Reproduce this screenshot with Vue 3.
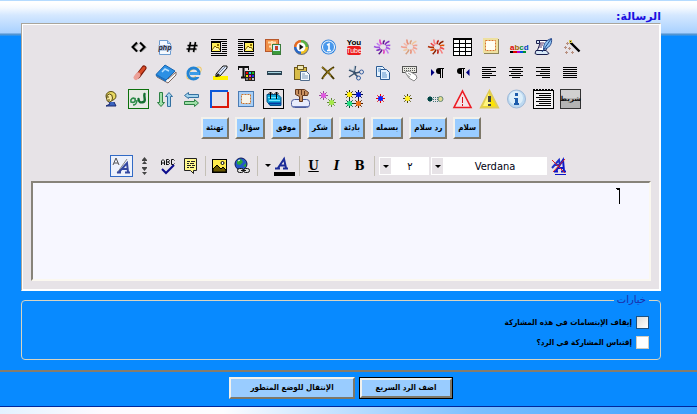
<script setup>
import { ref } from 'vue'

const message = ref('')
const font = ref('Verdana')
const size = ref('٢')
const noSmilies = ref(false)
const quote = ref(false)

// every icon is drawn on a 27x26 cell
const rect = (x, y, w, h, fill, extra = '') => `<rect x="${x}" y="${y}" width="${w}" height="${h}" fill="${fill}" ${extra}/>`
const path = (d, stroke, width = 1, fill = 'none', extra = '') => `<path d="${d}" stroke="${stroke}" stroke-width="${width}" fill="${fill}" ${extra}/>`
const line = (x, y, w) => rect(x, y, w, 1, '#000')
const round = 'stroke-linecap="round"'
const dots = 'stroke-dasharray="1 1"'
const dashes = 'stroke-dasharray="2 1"'

const burst = (colors) => {
    let out = ''
    for (let i = 0; i < 11; i++) {
        const a = (i * 32.7 + 12) * Math.PI / 180
        const end = i % 2 ? 9 : 7.5
        const p = (r, t) => `${(15 + Math.cos(t) * r).toFixed(1)} ${(13 + Math.sin(t) * r * 0.9).toFixed(1)}`
        out += path(`M${p(3, a)}Q${p(6, a - 0.05)} ${p(end, a + 0.15)}`, colors[i % colors.length], 1.6)
    }
    return out
}

const spark = (x, y, fill, ray, r = 2.5) => {
    const l = r + 2
    const d = r + 0.7
    return path(`M${x - l} ${y}h${2 * l}M${x} ${y - l}v${2 * l}M${x - d} ${y - d}l${2 * d} ${2 * d}M${x + d} ${y - d}l${-2 * d} ${2 * d}`, ray)
        + `<circle cx="${x}" cy="${y}" r="${r}" fill="${fill}"/>`
}

const thumb = (x) => rect(x, 8, 10, 10, '#000') + rect(x + 1, 9, 8, 8, '#ffef5a')
    + rect(x + 6, 10, 2, 2, '#8a6a00') + path(`M${x + 1} 16l3-4 2 2 1-1 2 3`, '#806000', 1, '#fff8b0')

const wrap = (x, lx) => line(5, 5, 16) + line(5, 7, 16) + thumb(x)
    + [9, 11, 13, 15, 17].map((y) => line(lx, y, 5)).join('') + line(5, 19, 16) + line(5, 21, 16)

const align = (offset) => [14, 9, 14, 10, 14, 8].map((w, i) => line(6 + Math.round((14 - w) * offset), 7 + i * 2, w)).join('')

const rows = [
    [
        { name: 'عصا', svg: path('M13.500 8.500l9 9', '#000', 2.4) + rect(12, 6, 3, 3, '#d8c850') + rect(13, 7, 1, 1, '#222') + path('M10.500 8v3M9 9.500h3M8.500 12v3M7 13.500h3M12.500 13v3M11 14.500h3M9.500 17v3M8 18.500h3M15.500 17v3M14 18.500h3', '#b89080') },
        { name: 'قصيدة', svg: path('M8.500 6.500h9l1 2-3 9H7l3-8z', '#171b4c', 1, '#fff') + path('M6 16.500h10l3 3-2 1H7l-2-1z', '#171b4c', 1, '#d7e8f7') + path('M6.500 6.500h3v3h-3z', '#171b4c', 1, '#d7e8f7') + path('M10 9h4M10 11h3M9 13h3', '#536') + path('M21.500 4.500c-6 2-8 5-8 11 5-1 9-5 8-11z', '#27498c', 1, '#8fc4f2') + path('M21 5L12 18', '#27498c') },
        { name: 'ألوان', svg: '<text x="7" y="16" font-family="Liberation Sans" font-weight="bold" font-size="8" fill="#e00000">a<tspan fill="#a06000">b</tspan><tspan fill="#00902c">c</tspan><tspan fill="#0040c0">d</tspan></text>' + rect(7, 17, 3, 2, '#000') + rect(10, 17, 4, 2, '#e00000') + rect(14, 17, 3, 2, '#b000d0') + rect(17, 17, 3, 2, '#0050e0') + rect(20, 17, 3, 2, '#009030') },
        { name: 'إطار', svg: rect(8, 5, 15, 15, '#8d8458') + rect(7, 4, 15, 15, '#eee0a0') + rect(9.5, 6.5, 10, 10, '#fffef4', 'stroke="#d8742e" ' + dashes) },
        { name: 'جدول', svg: rect(4, 4, 19, 18, '#000') + [6, 10, 14, 18].map((y) => [5, 11, 17].map((x) => rect(x, y, 5, 3, '#fff')).join('')).join('') },
        { name: 'نجوم حمراء', svg: burst(['#f04848', '#f88080', '#c02010', '#8c2000', '#e05000', '#b03008']) },
        { name: 'نجوم فاتحة', svg: burst(['#f0a090', '#f4b8a8', '#e89078', '#d8a080', '#f0c8a0']) },
        { name: 'نجوم بنفسجية', svg: burst(['#a050e0', '#c080f0', '#e040c0', '#601890', '#8030c0']) },
        { name: 'يوتيوب', svg: '<text x="13" y="11" text-anchor="middle" font-family="Liberation Sans" font-size="8" font-weight="bold">You</text>' + rect(6, 12, 14, 9, '#ec1c1c', 'rx="2"') + '<text x="13" y="19" text-anchor="middle" font-family="Liberation Sans" font-size="7" fill="#fff">Tube</text>' },
        { name: 'واحد', svg: '<circle cx="14.500" cy="13" r="7.500" fill="#3486df"/><circle cx="14.500" cy="13" r="6" fill="#4898ec" stroke="#fff"/>' + path('M13 11l2-1v6M13 16.500h4', '#fff', 1.6) },
        { name: 'وسائط', svg: '<circle cx="14.500" cy="13.500" r="7.500" fill="#777"/>' + path('M14 13V6a7 7 0 0 0-7 7z', 'none', 0, '#e86a20') + path('M14 13h7a7 7 0 0 0-7-7z', 'none', 0, '#58b040') + path('M14 13H7a7 7 0 0 0 7 7z', 'none', 0, '#2868c8') + path('M14 13v7a7 7 0 0 0 7-7z', 'none', 0, '#f0c020') + '<circle cx="14" cy="13" r="4.500" fill="#fff"/>' + path('M12.500 10v6l4-3z', 'none', 0, '#111') },
        { name: 'ألبوم', svg: rect(5.5, 5.5, 13, 12, '#f09048', 'stroke="#b8582c"') + path('M8 8.500h8M12 7v8M9 12.500h3', '#ffe0b0', 2) + rect(12.5, 10.5, 8, 10, '#d8f0ff', 'stroke="#3c7c3c"') + rect(13, 17, 7, 3, '#3c9c3c') + rect(15, 12, 3, 4, '#c8402c') },
        { name: 'صورة يمين', svg: wrap(11, 5) },
        { name: 'صورة يسار', svg: wrap(5, 16) },
        { name: 'كود', svg: path('M12 9l-2 10M17 9l-2 10M9 12.500h10M8 16h10', '#bbb', 1) + path('M11.500 8l-2 10M16.500 8l-2 10M8.500 11.500h10M7.500 15h10', '#000', 1.6) },
        { name: 'PHP', svg: path('M7.500 6.500h8l3 3v11h-11z', '#6c9cd0', 1, '#f4f9ff') + path('M15.500 6.500v3h3', '#6c9cd0', 1, '#bcd8f4') + rect(6, 11, 14, 6, '#b9cbe4') + '<text x="13" y="16" text-anchor="middle" font-family="Liberation Sans" font-size="7" font-weight="bold" font-style="italic" fill="#223">php</text>' },
        { name: 'HTML', svg: path('M13 9.500L8.500 13.500 13 17.500M16 9.500l4.500 4-4.500 4', '#aaa', 2) + path('M12 8.500L7.500 13l4.500 4.500M15 8.500l4.500 4.500-4.500 4.500', '#000', 2) }
    ],
    [
        { name: 'ضبط', svg: [7, 9, 11, 13, 15, 17].map((y) => line(6, y, 14)).join('') },
        { name: 'يمين', svg: align(1) },
        { name: 'توسيط', svg: align(0.5) },
        { name: 'يسار', svg: align(0) },
        { name: 'من اليمين', svg: path('M12.500 8v10M14.500 8v10M11 8.500h5', '#000') + path('M12 8h-1a3 3 0 0 0 0 6h1z', 'none', 0, '#000') + path('M20.500 9v7L17 12.500z', 'none', 0, '#000080') },
        { name: 'من اليسار', svg: path('M18.500 8v10M20.500 8v10M17 8.500h5', '#000') + path('M18 8h-1a3 3 0 0 0 0 6h1z', 'none', 0, '#000') + path('M9 9v7l3.500-3.500z', 'none', 0, '#000080') },
        { name: 'لوحة المفاتيح', svg: rect(7.5, 6.5, 14, 6, '#e8e8e0', 'stroke="#555"') + path('M9 8.500h12M9 10.500h12', '#555', 1, 'none', dots) + path('M10 12l4-1 7 4 1 3-3 3-5-3z', '#888', 1, '#fff') + path('M13 13l3 2M12 15l3 2', '#999') },
        { name: 'نسخ', svg: path('M8.500 6.500h6l2 2v8h-8z', '#2c5c94', 1, '#e4f2ff') + path('M12.500 9.500h6l3 3v7h-9z', '#2c5c94', 1, '#e4f2ff') + path('M10 9h3M10 11h2M14 13h4M14 15h5M14 17h5', '#5c94cc') },
        { name: 'قص', svg: path('M14.500 6l-1.500 7 4 4M8 10l7 3 4-1', '#38506c', 1.6) + path('M13.500 6l-.5 5M8 9l5 2', '#a8bccc') + '<circle cx="20.500" cy="12" r="2" fill="none" stroke="#3860a0"/><circle cx="17.500" cy="18" r="2" fill="none" stroke="#3860a0"/>' + path('M14 13l-6 4', '#38506c', 1.4) },
        { name: 'حذف', svg: path('M8 7c4 3 8 7 12 12M20 7c-5 3-9 7-12 12', '#463800', 2) + path('M8 7c4 3 7 6 9 9M19 8c-4 3-7 6-10 10', '#a88820') },
        { name: 'لصق', svg: rect(7.5, 7.5, 12, 12, '#d8bc48', 'stroke="#6c5820"') + rect(10.5, 5.5, 6, 4, '#f0e8b0', 'stroke="#6c5820"') + path('M13.500 11.500h6l3 3v6h-9z', '#506c8c', 1, '#f4faff') + path('M15 14h3M15 16h6M15 18h6', '#7898b8') },
        { name: 'خط', svg: rect(7, 11, 15, 4, '#2c4454') + rect(8, 12, 13, 1, '#a8d4e0') },
        { name: 'لون النص', svg: path('M5 7h11M10.500 7v10M8 17.500h4', '#111', 2) + path('M5.500 6v4M15.500 6v4', '#111') + rect(12, 11, 10, 10, '#222') + rect(13, 12, 2, 2, '#f00') + rect(16, 12, 2, 2, '#00dce8') + rect(19, 12, 2, 2, '#18c018') + rect(13, 15, 2, 2, '#f0e000') + rect(16, 15, 2, 2, '#f020d0') + rect(19, 15, 2, 2, '#2030f0') + rect(13, 18, 2, 2, '#888') + rect(16, 18, 2, 2, '#c05000') + rect(19, 18, 2, 2, '#c0c0c0') },
        { name: 'تظليل', svg: rect(7, 16, 15, 4, '#fff200') + path('M10 14l7-8h4v2l-7 8h-4z', '#111', 1, '#dce8f8') + path('M9 17l3-4 2 2-3 2z', 'none', 0, '#222') + path('M12 14l7-7', '#7888a8') },
        { name: 'إنترنت', svg: '<ellipse cx="15" cy="13" rx="8.500" ry="4" fill="none" stroke="#f0c860" transform="rotate(-35 15 13)"/><circle cx="14.500" cy="13.500" r="5.500" fill="none" stroke="#2484d4" stroke-width="3"/>' + rect(11, 12, 9, 3, '#3c9ce8') + rect(17, 15, 5, 2, '#e7e3e7') },
        { name: 'كتاب', svg: path('M5 17l11 6 8-8v-3l-8 7-11-5z', '#806860', 1, '#f0f4f8') + path('M4 14.500L13 5l10 6-9 9z', '#1864b0', 1, '#2c90e4') + path('M10 12l3-3 4 2', '#b8e0ff', 1.5) + path('M4 15l10 6', '#1c70c0', 1.5) },
        { name: 'ممحاة', svg: path('M13 16l6-8', '#7c1808', 5, 'none', round) + path('M14 14l5-6', '#d84c28', 3, 'none', round) + path('M11 17.500l2-2.500', '#eca098', 5, 'none', round) }
    ],
    [
        { name: 'شريط', svg: rect(3.5, 3.5, 20, 19, '#b4b4b4', 'stroke="#333"') + rect(4, 4, 19, 8, '#d0d0d0') + '<text x="13.500" y="15" text-anchor="middle" font-family="DejaVu Sans" font-size="7" font-weight="bold" fill="#111">شريط</text>' },
        { name: 'فقرة', svg: rect(3.5, 4.5, 20, 18, '#f4f2f4', 'stroke="#000"') + path('M3 4h21', '#000', 2, 'none', dashes) + [7, 9, 11, 13, 15, 17, 19].map((y, i) => line(i % 2 ? 9 : 6, y, i % 2 ? 12 : 15)).join('') },
        { name: 'معلومة', svg: '<circle cx="13.500" cy="13" r="9" fill="#bcd8f0" stroke="#9cb8d8"/><circle cx="13" cy="12" r="7" fill="#dceefa"/>' + rect(12, 7, 3, 3, '#1c5cac') + rect(12, 12, 3, 6, '#1c5cac') + rect(11, 12, 3, 1, '#1c5cac') + rect(11, 17, 5, 2, '#1c5cac') },
        { name: 'تنبيه', svg: path('M13.500 5L22 21.500H5z', '#e0cc58', 2, '#fce404') + path('M13 7L7 20h7z', 'none', 0, '#fff480') + rect(12, 10, 3, 6, '#444') + rect(12, 18, 3, 2, '#444') },
        { name: 'خطر', svg: path('M13.500 5L22 21.500H5z', '#ec1c24', 1.6, '#f4e4e8') + rect(13, 11, 1, 6, '#d81018') + rect(13, 18, 1, 2, '#d81018') },
        { name: 'تدرج', svg: path('M5 13l3-3 3 3-3 3z', 'none', 0, '#004444') + rect(6, 11, 4, 4, '#004444') + path('M11 11.500h5M11 13.500h5M11 15.500h5', '#447878', 1, 'none', dots) + '<circle cx="18.500" cy="13" r="2.500" fill="#e0dc90" stroke="#668878"/>' },
        { name: 'نجمة صفراء', svg: spark(12.5, 12.5, '#ffee20', '#4c4800') },
        { name: 'نجمة حمراء', svg: spark(12.5, 12.5, '#1020ff', '#f00000') },
        { name: 'أربع نجوم', svg: spark(8.5, 8.5, '#ffee00', '#333000') + spark(17.5, 8.5, '#0018d8', '#000848') + spark(8.5, 17.5, '#20e080', '#005030') + spark(17.5, 17.5, '#f07010', '#502000') },
        { name: 'نجمتان', svg: spark(9.5, 9.5, '#e058e0', '#984898') + spark(17.5, 16.5, '#a4e848', '#608838') },
        { name: 'ختم', svg: rect(4.5, 13.5, 18, 8, '#e8ecfc', 'rx="3" stroke="#4c5c9c"') + path('M6 20.500h16', '#6878b8') + path('M8.500 3.500h9l4 3-1 3h-5v6h-3v-5l-4-2z', '#64381c', 1, '#c89060') + path('M11.500 4v4M14.500 4v5M17.500 5v4', '#64381c') },
        { name: 'رفع', svg: rect(3.5, 3.5, 20, 19, '#e7e3e7', 'stroke="#000"') + path('M7 8.500h11l3 3v8h-11l-3-4z', '#004c84', 1, '#10a8d8') + path('M8 11.500h10M9 14.500h11', '#70e8ff') + path('M9 17.500h12', '#0038a0', 2) + path('M10.500 6v7M16.500 6v7M8.500 8l2-2 2 2M14.500 8l2-2 2 2', '#000') },
        { name: 'مربع', svg: rect(5, 5, 16, 16, '#4c7cb4') + rect(6, 6, 14, 14, '#a8d0f8') + rect(8.5, 8.5, 9, 9, '#f8f4e8', 'stroke="#c8742e" ' + dashes) },
        { name: 'حدود', svg: path('M5 22V5h17', '#0c58d8', 2) + path('M22 6v15H6', '#dc1808', 2) },
        { name: 'أفقي', svg: path('M5.500 9.500l4-3v2h10v3h-10v1z', '#3470a0', 1, '#a4d4ec') + path('M19.500 17l-4-3.500v2h-10v3h10v2z', '#2c8044', 1, '#a0e0a8') },
        { name: 'عمودي', svg: path('M9 20.500L5.500 16.500h2v-10h3v10h2z', '#2c8044', 1, '#a0e0a8') + path('M17 6.500l-3.500 4h2v10h3v-10h2z', '#3470a0', 1, '#a4d4ec') },
        { name: 'توقيع', svg: rect(3.5, 3.5, 20, 19, '#e7e9e4', 'stroke="#0c700c"') + path('M19.500 8c-1 3 2 7-1 8-3 1-5 0-5-3', '#147030', 2.4, 'none', round) + path('M10 12c1 4-1 5-4 4-1-3 2-5 4-3M12 14c0 3-2 5-4 5', '#2c8c48', 1.6) },
        { name: 'شخص', svg: '<ellipse cx="13" cy="10" rx="5" ry="4.500" fill="#e8d860" stroke="#584c10"/><ellipse cx="11.500" cy="12" rx="3" ry="4" fill="#f8e8a0" stroke="#584c10"/>' + path('M11 16l1 2-4 2h10l-2-4', '#182870', 1, '#3c64c0') + path('M9 11h2M10 14h2', '#584c10') }
    ]
]

const phrases = ['سلام', 'رد سلام', 'بسمله', 'بادئة', 'شكر', 'موفق', 'سؤال', 'تهنئة']
</script>

<template>
    <form class="page" dir="rtl" @submit.prevent>
        <div class="main">
            <label class="title" for="message">الرسالة:</label>
            <div class="panel">
                <div class="icons">
                    <div v-for="(row, i) in rows" :key="i" class="icon-row">
                        <button v-for="icon in row" :key="icon.name" type="button" class="icon" :aria-label="icon.name">
                            <svg viewBox="0 0 27 26" width="27" height="26" v-html="icon.svg"></svg>
                        </button>
                    </div>
                </div>

                <div class="phrases">
                    <button v-for="p in phrases" :key="p" type="button" class="raised phrase">{{ p }}</button>
                </div>

                <div class="toolbar" dir="ltr">
                    <button type="button" class="tool" aria-label="المحرر">
                        <svg viewBox="0 0 23 22" width="23" height="22">
                            <rect x=".5" y=".5" width="22" height="21" fill="#edf1fb" stroke="#316ac5" />
                            <path d="M3 10l3-7 3 7M4 8h4" stroke="#555" fill="none" />
                            <path d="M7 18L17 4" stroke="#888" />
                            <path d="M9 17l8-9 1 9M12 14h6M7 17.500h4M15 17.500h5" stroke="#3448a0" stroke-width="2" fill="none" />
                        </svg>
                    </button>
                    <button type="button" class="tool" aria-label="الحجم">
                        <svg viewBox="0 0 23 22" width="23" height="22">
                            <path d="M9 5l2.500-3L14 5zM9 9l2.500-3L14 9zM9 13l2.500 3 2.500-3zM9 17l2.500 3 2.500-3z" fill="#444" />
                            <path d="M9 5.500h5M9 12.500h5" stroke="#444" />
                        </svg>
                    </button>
                    <button type="button" class="tool" aria-label="تدقيق إملائي">
                        <svg viewBox="0 0 23 22" width="23" height="22">
                            <path d="M5.500 10V6l1.500-1.500L8.500 6v4M5 8h4M10.500 10V4.500h2l1 1-1 1.500 1 1.500-1 1h-2M11 7h2M18.500 5.500l-1-1h-2v5h2l1-1" stroke="#111" fill="none" />
                            <path d="M6 14l4 4 8-8" stroke="#0c0c8c" stroke-width="2" fill="none" />
                        </svg>
                    </button>
                    <button type="button" class="tool" aria-label="اقتباس">
                        <svg viewBox="0 0 23 22" width="23" height="22">
                            <path d="M5.500 3.500h12v12h-3v3l-3-3h-6z" fill="#fff88c" stroke="#222" />
                            <path d="M8 6.500h3M12 6.500h4M8 8.500h2M11 8.500h4M8 10.500h4M13 10.500h3M8 12.500h2M11 12.500h4" stroke="#222" />
                        </svg>
                    </button>
                    <span class="sep"></span>
                    <button type="button" class="tool" aria-label="صورة">
                        <svg viewBox="0 0 23 22" width="23" height="22">
                            <rect x="4.500" y="4.500" width="14" height="13" fill="#ffed4c" stroke="#000" />
                            <path d="M5 16v-2l4-4 4 4 2-2 3 3v2H5z" fill="#685800" stroke="#000" />
                            <circle cx="14.500" cy="8" r="1.500" fill="#fff" stroke="#000" />
                        </svg>
                    </button>
                    <button type="button" class="tool" aria-label="رابط">
                        <svg viewBox="0 0 23 22" width="23" height="22">
                            <circle cx="10" cy="9" r="6" fill="#2458c8" stroke="#0c1858" />
                            <path d="M6 6l4-2 2 3-3 3-3-1zM12 11l3-3v4z" fill="#28a838" />
                            <path d="M7 6l2-1" stroke="#fff" />
                            <rect x="6.500" y="13.500" width="6" height="4" rx="2" fill="#ddd" stroke="#111" />
                            <rect x="12.500" y="13.500" width="6" height="4" rx="2" fill="#ddd" stroke="#111" />
                            <path d="M10 15.500h5" stroke="#111" />
                        </svg>
                    </button>
                    <span class="sep"></span>
                    <button type="button" class="tool" aria-label="لون الخط">
                        <svg viewBox="0 0 36 22" width="36" height="22">
                            <path d="M5 9h6l-3 3z" fill="#000" />
                            <path d="M18 13l6-9 2 9M20 10.500h5M15 13.500h5M23 13.500h5" stroke="#1c2c98" stroke-width="2" fill="none" />
                            <rect x="14" y="17" width="21" height="4" fill="#000" />
                        </svg>
                    </button>
                    <span class="sep"></span>
                    <button type="button" class="tool letter underline">U</button>
                    <button type="button" class="tool letter italic">I</button>
                    <button type="button" class="tool letter">B</button>
                    <span class="sep"></span>
                    <span class="drop size">
                        <select v-model="size" aria-label="حجم الخط">
                            <option>١</option>
                            <option>٢</option>
                            <option>٣</option>
                        </select>
                        <i class="arrow"></i>
                    </span>
                    <span class="drop font">
                        <select v-model="font" aria-label="نوع الخط">
                            <option>Verdana</option>
                            <option>Tahoma</option>
                            <option>Arial</option>
                        </select>
                        <i class="arrow"></i>
                    </span>
                    <button type="button" class="tool" aria-label="إزالة التنسيق">
                        <svg viewBox="0 0 23 22" width="23" height="22">
                            <path d="M5 13l7-8 1 5M8 10h4" stroke="#2030c8" stroke-width="2" fill="none" />
                            <path d="M9 16l7-11 1 11M11 13h6M7 16.500h4M14 16.500h5" stroke="#0c18c8" stroke-width="2" fill="none" />
                            <path d="M8 19.500h11" stroke="#0c18c8" />
                            <path d="M5 5l13 13M18 4L6 17" stroke="#e02020" />
                        </svg>
                    </button>
                </div>

                <div class="editor">
                    <textarea id="message" v-model="message"></textarea>
                    <svg class="caret" viewBox="0 0 4 16" width="4" height="16"><path d="M3.500 0v16M0 .5h3M1 1.500h2" stroke="#000" /></svg>
                </div>
            </div>

            <fieldset class="options">
                <legend>خيارات</legend>
                <label class="option">
                    <input v-model="noSmilies" type="checkbox" class="active">
                    <span>إيقاف الإبتسامات في هذه المشاركة</span>
                </label>
                <label class="option">
                    <input v-model="quote" type="checkbox">
                    <span>إقتباس المشاركة في الرد؟</span>
                </label>
            </fieldset>
        </div>

        <div class="actions">
            <button type="submit" class="raised send">اضف الرد السريع</button>
            <button type="button" class="raised advanced">الإنتقال للوضع المتطور</button>
        </div>
        <div class="footer"></div>
    </form>
</template>

<style>
    body {
        margin: 0;
        background: #088aff;
    }
</style>

<style scoped>
    .page {
        font-family: "DejaVu Sans", Verdana, sans-serif;
        font-size: 11px;
        background: linear-gradient(#b5dbff 0 1px, #fff 1px 3px, #f4f9ff 8px, #d5e8ff 15px, #a8d1ff 33px, #4c90d0 34px, #5799d4 35px, #088aff 36px) no-repeat;
    }

    .main {
        padding: 11px 36px 0 21px;
    }

    .title {
        display: block;
        height: 12px;
        line-height: 12px;
        font-weight: bold;
        color: #1a10e0;
    }

    .panel {
        border: 1px solid;
        border-color: #a9a59c #fff #fff #a9a59c;
        outline: 1px solid #fff;
        outline-offset: -2px;
        background: #e7e3e7;
        padding: 10px 9px 9px;
    }

    .icons {
        width: 486px;
        margin: 0 auto;
    }

    .icon-row {
        display: flex;
    }

    button {
        font-family: inherit;
        cursor: pointer;
    }

    .icon,
    .tool {
        border: 0;
        padding: 0;
        background: none;
    }

    .icon svg,
    .tool svg {
        display: block;
        direction: ltr;
    }

    .phrases {
        display: flex;
        justify-content: center;
        gap: 6px;
        margin-top: 5px;
    }

    .raised {
        height: 22px;
        box-sizing: border-box;
        border: 2px solid;
        border-color: #f2f1ec #7d7768 #7d7768 #f2f1ec;
        background: #99ccff;
        color: #000;
        font-family: "DejaVu Sans Condensed", "DejaVu Sans", sans-serif;
        font-size: 8px;
        font-weight: bold;
        line-height: 16px;
        white-space: nowrap;
    }

    .phrase {
        padding: 0 3px;
    }

    .toolbar {
        display: flex;
        justify-content: center;
        align-items: center;
        height: 22px;
        margin: 16px 0 4px;
        padding-right: 2px;
    }

    .sep {
        width: 1px;
        height: 20px;
        margin: 0 2px 0 3px;
        background: #c4c0b6;
    }

    .letter {
        width: 23px;
        height: 22px;
        font: bold 12px "DejaVu Serif", serif;
    }

    .underline {
        text-decoration: underline;
    }

    .italic {
        font-style: italic;
    }

    .drop {
        position: relative;
        margin-left: 2px;
    }

    .drop select {
        display: block;
        width: 100%;
        height: 18px;
        padding: 0 0 0 12px;
        border: 0;
        border-radius: 0;
        background: #fff;
        color: #001;
        appearance: none;
        font: 11px "DejaVu Sans Condensed", "DejaVu Sans", sans-serif;
        text-align: center;
        text-align-last: center;
    }

    .size {
        width: 50px;
    }

    .font {
        width: 116px;
    }

    .arrow {
        position: absolute;
        left: 1px;
        top: 1px;
        width: 11px;
        height: 16px;
        background: #e7e3e7;
        pointer-events: none;
    }

    .arrow::after {
        content: '';
        position: absolute;
        left: 3px;
        top: 7px;
        border: 3px solid transparent;
        border-top-color: #000;
        border-bottom: 0;
    }

    .editor {
        position: relative;
    }

    .editor textarea {
        display: block;
        width: 100%;
        height: 100px;
        box-sizing: border-box;
        border: 2px solid;
        border-color: #87837a #fbf8f0 #fbf8f0 #87837a;
        background: #f7f7ff;
        resize: none;
        outline: 0;
    }

    .caret {
        position: absolute;
        right: 31px;
        top: 7px;
    }

    .options {
        margin: 2px 0 0;
        border: 1px solid #d8d4c0;
        border-radius: 4px;
        padding: 5px 11px 7px;
    }

    .options legend {
        height: 14px;
        line-height: 14px;
        padding: 0 3px;
        font-size: 10px;
        color: #1c2ca8;
    }

    .option {
        display: flex;
        align-items: center;
        gap: 4px;
        height: 20px;
        font-family: "DejaVu Sans Condensed", "DejaVu Sans", sans-serif;
        font-size: 8px;
        font-weight: bold;
    }

    .option input {
        width: 13px;
        height: 13px;
        box-sizing: border-box;
        margin: 0;
        appearance: none;
        border: 1px solid #d0ccc0;
        background: #fff;
    }

    .option input.active {
        border-color: #1c5180;
        background: linear-gradient(135deg, #dcdcd7, #fff);
    }

    .option input:checked {
        background: #1c5180;
    }

    .actions {
        display: flex;
        justify-content: center;
        gap: 4px;
        margin-top: 10px;
        border-top: 2px solid #857c6c;
        padding: 5px 15px 7px 0;
    }

    .send {
        width: 94px;
        outline: 1px solid #000;
        outline-offset: -1px;
        border-width: 3px;
        line-height: 14px;
        padding: 0;
    }

    .advanced {
        width: 126px;
        padding: 0;
    }

    .footer {
        height: 7px;
        border-top: 1px solid #00279c;
        background: linear-gradient(90deg, #e3f2ff, #fdfaff 15%, #fdfdff 32%, #7cc0ff 68%, #3aa0ff);
    }
</style>
